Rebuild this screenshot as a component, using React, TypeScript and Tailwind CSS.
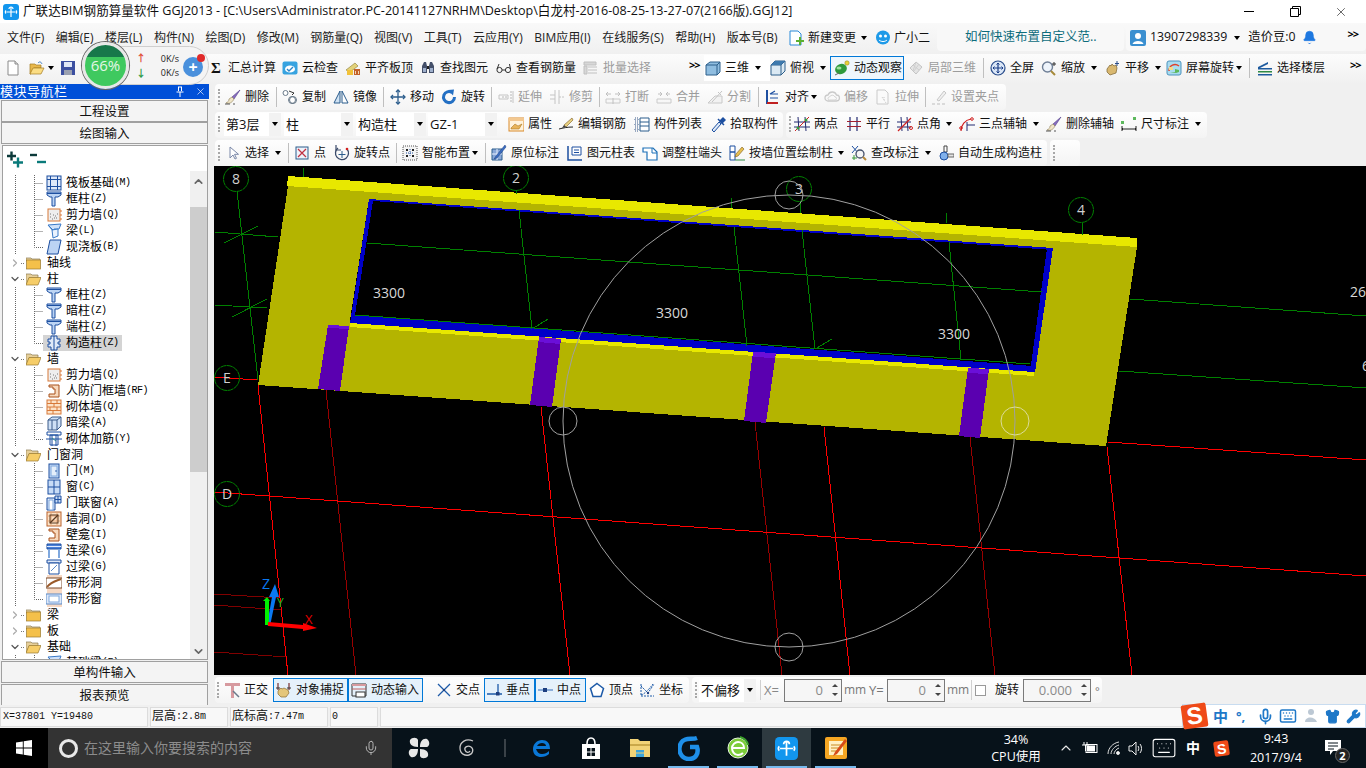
import React from 'react';
import { Bell, ChevronDown, ChevronRight, ChevronUp, Keyboard, Mic, Shirt, Wrench, X } from 'lucide-react';

const Svg: React.FC<{ children: React.ReactNode; s?: number }> = ({ children, s = 16 }) => (
  <svg width={s} height={s} viewBox="0 0 16 16" className="shrink-0">{children}</svg>
);

/* ---------- toolbar icons ---------- */
const icons = {
  doc: <Svg><path d="M3 1h7l3 3v11H3z" fill="#fff" stroke="#8a8a8a" /><path d="M10 1v3h3" fill="#ddd" stroke="#8a8a8a" /></Svg>,
  open: <Svg><path d="M1 4h5l1 1h5v3H5l-3 6H1z" fill="#e8b84c" stroke="#a57b22" strokeWidth=".7" /><path d="M4 8h11l-3 6H1z" fill="#fbdd84" stroke="#a57b22" strokeWidth=".7" /><path d="M9 3c2-2 3-1 4 1" fill="none" stroke="#3a7ac0" /></Svg>,
  save: <Svg><path d="M1 1h14v14H1z" fill="#3c4fa0" /><path d="M4 2h8v5H4z" fill="#dfe6f5" /><path d="M4 10h8v5H4z" fill="#9aa0b0" /></Svg>,
  cloud: <Svg><rect x=".5" y="1.5" width="15" height="13" rx="2" fill="#37a3e0" /><ellipse cx="8" cy="9" rx="5" ry="3.6" fill="#fff" /><path d="M5 9l2 2 4-4" fill="none" stroke="#2b85c8" strokeWidth="1.4" /></Svg>,
  level: <Svg><path d="M1 10l9-7 3 3-8 6z" fill="#e3d27a" stroke="#8a7a30" strokeWidth=".6" /><path d="M2 10h6v5H2z" fill="#f2c23a" /><path d="M9 9h6v6H9z" fill="#c4622a" /><path d="M10 11h1v3h-1zM13 11h1v3h-1z" fill="#f4d9b5" /></Svg>,
  bino: <Svg><path d="M2 6l2-4h2l1 4v7H2zM9 6l1-4h2l2 4v7H9z" fill="#44506a" /><path d="M3 8h3v4H3zM10 8h3v4h-3z" fill="#9fb0cc" /><path d="M7 6h2v3H7z" fill="#222" /></Svg>,
  glass: <Svg><circle cx="3.5" cy="10" r="2.6" fill="none" stroke="#333" /><circle cx="12" cy="10" r="2.6" fill="none" stroke="#333" /><path d="M6 10h3.500M1 9l2-5M14.500 9l-1-5" stroke="#333" fill="none" /></Svg>,
  batch: <Svg><path d="M1 2h12v3H1zM1 6h3v8H1zM5 7h9M5 10h9M5 13h9" fill="#d7d7d7" stroke="#c0c0c0" /></Svg>,
  cube: <Svg><path d="M1 5l4-3h10v10l-3 3H1z" fill="#8fbde0" stroke="#2d5f8a" /><path d="M1 5h11v10M12 5l3-3" fill="none" stroke="#2d5f8a" /></Svg>,
  cubeTop: <Svg><path d="M1 5l4-4h10v10l-4 4H1z" fill="#dbe9f3" stroke="#2d5f8a" /><path d="M1 5h10v10M11 5l4-4" fill="none" stroke="#2d5f8a" /><path d="M1 5l4-4h10l-4 4z" fill="#3d79ad" /></Svg>,
  orbit: <Svg><ellipse cx="7" cy="9" rx="6" ry="5" fill="#2f9a3c" transform="rotate(-25 7 9)" /><ellipse cx="5" cy="8" rx="2.500" ry="1.500" fill="#9fe09f" /><circle cx="13" cy="3" r="2.200" fill="#e8d23a" stroke="#8a7a20" strokeWidth=".5" /><path d="M1 15l4-2" stroke="#666" /></Svg>,
  localCube: <Svg><path d="M2 8l6-6 6 5-6 7z" fill="#e4e4e4" stroke="#c4c4c4" /><path d="M5 5l6 5M8 2l-3 9M11 4l-5 7" stroke="#cfcfcf" fill="none" /></Svg>,
  zoomAll: <Svg><circle cx="8" cy="8" r="7" fill="#dbe7f7" stroke="#2b4e8c" strokeWidth="1.200" /><path d="M8 3v10M3 8h10" stroke="#1b3e88" strokeWidth="1.200" /><path d="M6.500 4.500L8 3l1.500 1.500M6.500 11.500L8 13l1.500-1.500M4.500 6.500L3 8l1.500 1.500M11.500 6.500L13 8l-1.500 1.500" fill="none" stroke="#1b3e88" /></Svg>,
  zoom: <Svg><circle cx="6.500" cy="7" r="5" fill="#eef4fb" stroke="#6f7f96" strokeWidth="1.400" /><path d="M10 11l4 4" stroke="#a68a3a" strokeWidth="2" /><path d="M13 2v4M11 4h4" stroke="#333" /></Svg>,
  hand: <Svg><path d="M2 9l3-4 1 1 1-2 2 2 2-1 1 3-1 5-6 2-3-3z" fill="#d9b870" stroke="#7a6230" strokeWidth=".7" /><path d="M12 1v5M10 3.500h4" stroke="#2b4e8c" /></Svg>,
  rotateScreen: <Svg><rect x="1" y="1" width="14" height="14" rx="2" fill="#a9dcf0" stroke="#4d93bd" /><path d="M3 11c0-6 6-8 10-5" fill="none" stroke="#e0402a" strokeWidth="1.500" /><path d="M4 12h5v-3l4 1v2l-3 1z" fill="#5cb85c" /><path d="M3 7h4v3H3z" fill="#f2dc8a" /></Svg>,
  layers: <Svg><path d="M1 7l10-5v2L3 8h12v1.500H1z" fill="#1d5a9e" /><path d="M1 11h14v1.500H1z" fill="#2f8a44" /><path d="M1 14h14v1.500H1z" fill="#1d5a9e" /></Svg>,
  brush: <Svg><path d="M15 1L7 8l2 2z" fill="#8a6fc0" stroke="#4f3b88" strokeWidth=".6" /><path d="M7 8l-3 2c0 2-1 3-3 4 3 1 6 0 8-4z" fill="#f0e5c8" stroke="#8a7a50" strokeWidth=".6" /><path d="M0 15h5M8 15h2" stroke="#555" /></Svg>,
  copy: <Svg><circle cx="3.500" cy="4" r="2.500" fill="#fff" stroke="#6a7a8a" /><circle cx="10" cy="11" r="3.500" fill="#fff" stroke="#6a7a8a" /><circle cx="11" cy="11" r="3.500" fill="none" stroke="#6a7a8a" /><path d="M7 2l5 2-2 2" fill="none" stroke="#333" /></Svg>,
  mirror: <Svg><path d="M1 14L7 2v12z" fill="#cfe2f3" stroke="#2b5c8c" /><path d="M9 2l6 12H9z" fill="#fff" stroke="#2b5c8c" /></Svg>,
  move: <Svg><path d="M8 1v14M1 8h14" stroke="#2b5c8c" strokeWidth="1.300" /><path d="M6 3l2-2 2 2M6 13l2 2 2-2M3 6L1 8l2 2M13 6l2 2-2 2" fill="none" stroke="#2b5c8c" strokeWidth="1.300" /></Svg>,
  rotate: <Svg><path d="M11 3.500A5.500 5.500 0 1 0 13.500 8" fill="none" stroke="#2470c4" strokeWidth="3" /><path d="M7 1l6-.500-1 6z" fill="#2470c4" /></Svg>,
  extend: <Svg><path d="M1 6h9v4H1z" fill="none" stroke="#c4c4c4" /><path d="M4 8h5M13 2v12" stroke="#b8b8b8" strokeDasharray="2 1" /><path d="M15 2v12" stroke="#c4c4c4" /></Svg>,
  trim: <Svg><path d="M6 1v14M10 1v14M1 6h5M1 10h5" stroke="#c4c4c4" fill="none" /><path d="M10 8h5" stroke="#c4c4c4" strokeDasharray="2 1" /></Svg>,
  breakIc: <Svg><path d="M1 10h14v4H1z" fill="none" stroke="#cacaca" /><path d="M2 5h4M10 5h4M3 3L1 5l2 2M13 3l2 2-2 2M8 9v6" stroke="#c0c0c0" fill="none" /></Svg>,
  merge: <Svg><path d="M1 10h14v4H1z" fill="none" stroke="#cacaca" /><path d="M2 5h4M10 5h4M4 3l2 2-2 2M12 3l-2 2 2 2" stroke="#c0c0c0" fill="none" /></Svg>,
  split: <Svg><path d="M1 14L8 7h7v7z" fill="#f2f2f2" stroke="#c8c8c8" /><path d="M5 13l10-11M11 3l3 3" stroke="#c4c4c4" fill="none" /></Svg>,
  align: <Svg><path d="M2 1v14" stroke="#1d4fa0" strokeWidth="2" /><path d="M2 14h11" stroke="#c02020" strokeWidth="2" /><path d="M5 5l5-3M5 5h8M5 9h8" stroke="#1d4fa0" strokeWidth="1.200" fill="none" /></Svg>,
  offset: <Svg><path d="M4 12a3 3 0 0 1 0-6 4.500 4.500 0 0 1 8.500 0 3 3 0 0 1 0 6z" fill="none" stroke="#cacaca" strokeWidth="1.300" /><path d="M5.500 11a1.500 1.500 0 0 1 0-3 3 3 0 0 1 5.500 0 1.500 1.500 0 0 1 0 3z" fill="none" stroke="#d4d4d4" /></Svg>,
  stretch: <Svg><path d="M2 1h8l3 3v11H2z" fill="#fafafa" stroke="#cacaca" /><path d="M7 8l4 6M9 8v3" stroke="#c8c8c8" strokeDasharray="1 1" /></Svg>,
  grips: <Svg><path d="M6 11l7-9 2 2-7 8z" fill="#f0f0f0" stroke="#c8c8c8" /><path d="M1 15h3M6 15h3M11 15h3" stroke="#bdbdbd" /></Svg>,
  props: <Svg><rect x="1" y="2" width="15" height="13" fill="#fff3dc" stroke="#d98a2a" /><path d="M1 2h15v3H1z" fill="#f3c890" /><path d="M3 12l4-4 3 2 4-2-3 5H3z" fill="#e8b45a" stroke="#a06a10" strokeWidth=".5" /></Svg>,
  editBar: <Svg><path d="M1 13c4-1 8-2 14-2" stroke="#222" fill="none" /><path d="M14 2L6 9l2 2 7-7z" fill="#e8d080" stroke="#7a5a20" strokeWidth=".6" /><path d="M6 9l-2 3 4-1z" fill="#444" /></Svg>,
  list: <Svg><path d="M1 2h3v3H1zM1 7h3v3H1zM1 12h3v3H1z" fill="none" stroke="#3a5a8a" strokeDasharray="1 1" /><path d="M6 2h9v13H6zM6 6h9M6 10h9" fill="#fff" stroke="#2b5c8c" /></Svg>,
  picker: <Svg><path d="M2 14l7-8 2 2-7 8z" fill="#dfeaf8" stroke="#1d4fa0" /><path d="M9 5l4-4 3 3-4 4z" fill="#1d4fa0" /><path d="M8 3l6 6" stroke="#1d4fa0" strokeWidth="1.500" /></Svg>,
  two: <Svg><path d="M4 1l1 14M11 1l1 14M0 6h16M0 11h16" stroke="#232a70" /><path d="M1 15L15 1" stroke="#d02020" /><circle cx="4" cy="12" r="1.500" fill="#3a9a3a" /><circle cx="12" cy="4" r="1.500" fill="#3a9a3a" /></Svg>,
  parallel: <Svg><path d="M4 1v14M11 1v14" stroke="#232a70" strokeWidth="1.200" /><path d="M1 5.500h14M1 10.500h14" stroke="#a02030" strokeWidth="1.200" /></Svg>,
  angle: <Svg><path d="M4 1l1 14M10 1l1 14M0 6h14M0 11h14" stroke="#232a70" /><path d="M1 15L14 2" stroke="#d02020" strokeWidth="1.200" /><circle cx="14" cy="12" r="1.500" fill="none" stroke="#d02020" /></Svg>,
  three: <Svg><path d="M2 15c0-6 4-11 10-12" fill="none" stroke="#d02020" strokeWidth="1.200" /><path d="M8 6v9M8 9h8" stroke="#232a70" /><circle cx="13" cy="3" r="1.300" fill="none" stroke="#d02020" /><circle cx="2" cy="12" r="1.300" fill="none" stroke="#d02020" /></Svg>,
  dim: <Svg><path d="M1 10v5M15 10v5M1 13h14M2 12l-1 1 1 1M14 12l1 1-1 1" stroke="#222" fill="none" /><rect x="0" y="5" width="3" height="3" fill="#5cb85c" /><rect x="12" y="1" width="3" height="3" fill="#5cb85c" /></Svg>,
  cursor: <Svg><path d="M5 2l0 11 3-3 2 4 1.500-.700-2-4h4z" fill="#fff" stroke="#7a88a8" /></Svg>,
  point: <Svg><rect x="2" y="2" width="12" height="12" fill="#eef2fa" stroke="#2b5c8c" /><path d="M4 4l8 8M12 4l-8 8" stroke="#c03040" strokeWidth="1.200" /></Svg>,
  rotPoint: <Svg><path d="M4 3a6.500 6.500 0 1 0 9 1" fill="none" stroke="#3a4a6a" strokeWidth="1.300" /><path d="M2 0v5h5" fill="none" stroke="#3a4a6a" strokeWidth="1.200" /><path d="M8 6v7M4.500 9.500h7" stroke="#2b5c8c" /><circle cx="13" cy="4" r="1.300" fill="#d02020" /></Svg>,
  smart: <Svg><rect x="1" y="1" width="14" height="14" fill="#f4f4f4" stroke="#555" strokeDasharray="1 1" /><path d="M8 4v8M4 8h8" stroke="#1d4fa0" strokeDasharray="1 1" /><path d="M4 4h2v2H4zM10 4h2v2h-2zM4 10h2v2H4zM10 10h2v2h-2z" fill="#222" /></Svg>,
  inPlace: <Svg><path d="M1 4h10v11H1z" fill="#8aa8d8" stroke="#2b5c8c" /><path d="M1 9h10M6 4v11" stroke="#e8f0ff" /><path d="M14 0L5 11l-2 3 3-1 9-11z" fill="#3a6cc0" stroke="#1d3f80" strokeWidth=".5" /></Svg>,
  table: <Svg><path d="M1 1v14h14" fill="none" stroke="#1d4fa0" strokeWidth="1.500" /><path d="M5 2h9v8H5z" fill="#fff" stroke="#1d4fa0" /><path d="M7 5h5M7 7.500h5" stroke="#1d4fa0" /></Svg>,
  adjust: <Svg><path d="M1 3h10l4 4v8H5V7H1z" fill="#fff" stroke="#1d70b8" strokeWidth="1.200" /><path d="M10 3v5h5" fill="none" stroke="#1d70b8" /></Svg>,
  drawCol: <Svg><path d="M1 1h5v6H1zM1 7h5v8H1z" fill="#fff" stroke="#1d4fa0" /><path d="M6 15h10" stroke="#2f8a44" /><path d="M13 2l-6 7-1 3 3-1 6-7z" fill="#e8c050" stroke="#7a5a20" strokeWidth=".6" /></Svg>,
  check: <Svg><path d="M1 1l7 8M7 1L1 8" stroke="#1d4fa0" /><circle cx="9" cy="9" r="4" fill="#f5f5f5" stroke="#44506a" strokeWidth="1.300" /><path d="M12 12l3 3" stroke="#b88a3a" strokeWidth="2" /><path d="M1 13h5M3 10v5" stroke="#3a9a3a" /></Svg>,
  auto: <Svg><path d="M6 1h3v6H6z" fill="#fff" stroke="#444" /><ellipse cx="6" cy="11" rx="4" ry="4" fill="#7fb0ec" stroke="#1d4fa0" /><path d="M10 9h6v3h-6z" fill="#e4e4e4" stroke="#666" /></Svg>,
  ortho: <Svg><path d="M1 1h15v3H10v12H7V4H1z" fill="#d79a9f" /><path d="M9 9l6 6" stroke="#6a7a8a" strokeWidth="1.500" /></Svg>,
  snap: <Svg><path d="M2 9l3-3 1 1 2-1 2 1 2 1 1 3-3 4H5l-3-3z" fill="#e4c67a" stroke="#8a6a30" strokeWidth=".7" /><path d="M2 1v7M13 1v7" stroke="#7a3030" strokeWidth="1.200" /><path d="M0 6h4M11 6h4" stroke="#333" /></Svg>,
  dyn: <Svg><path d="M1 2h14v12H1z" fill="none" stroke="#333" /><path d="M1 2h14v2H1z" fill="#d79a9f" /><path d="M1 7h14" stroke="#c06060" /><rect x="5" y="10" width="9" height="5" fill="#fff" stroke="#333" /></Svg>,
  cross: <Svg><path d="M2 2l12 12M14 2L2 14" stroke="#1d5aa8" strokeWidth="1.300" /><rect x="7" y="7" width="2" height="2" fill="#1d3f80" /></Svg>,
  perp: <Svg><path d="M1 12h16M12 2v10" stroke="#1d5aa8" strokeWidth="1.300" /><rect x="10" y="10" width="3.500" height="3.500" fill="#1d3f80" /></Svg>,
  mid: <Svg><path d="M1 8h15" stroke="#5a8ac8" strokeWidth="1.300" /><rect x="6" y="6" width="4" height="4" fill="#1d3f80" /></Svg>,
  vertex: <Svg><path d="M8 1.500l6.500 5-2.500 8H4l-2.500-8z" fill="#fff" stroke="#1d5aa8" strokeWidth="1.500" /></Svg>,
  coord: <Svg><path d="M2 13c4-1 9-7 12-11M2 4l7 7 6-9M2 2v12M2 14h13" fill="none" stroke="#1d5aa8" strokeDasharray="2 1" /><circle cx="9" cy="11" r="1.200" fill="#1d3f80" /></Svg>,
};

/* ---------- tree icons ---------- */
const treeIcons: Record<string, React.ReactNode> = {
  raft: <Svg><rect x="1" y="1" width="14" height="14" fill="#dfe9f8" stroke="#1d4fa0" /><path d="M1 4.500h14M1 11.500h14M4.500 1v14M11.500 1v14" stroke="#1d4fa0" /></Svg>,
  tcol: <Svg><path d="M1 1h14v3l-3 2H9v9H6V6H4L1 4z" fill="#bcd4f4" stroke="#1d4fa0" /><path d="M1 2.500h14" stroke="#1d4fa0" /></Svg>,
  wall: <Svg><rect x="2" y="2" width="12" height="12" fill="#eee" stroke="#d87a3a" /><path d="M4 10h1M7 8h1M10 11h1M6 12h1M11 7h1M8 11h1M4 7h1M9 9h1" stroke="#777" /><path d="M14 4h2M14 8h2M14 12h2" stroke="#d87a3a" /></Svg>,
  beam: <Svg><path d="M2 2l13-1-2 5-5 0-1 2z" fill="#d0e2fa" stroke="#3a7ac8" /><path d="M6 7l1 8 5-2V6z" fill="#eaf3ff" stroke="#3a7ac8" /><path d="M3 3l4 4" stroke="#3a7ac8" /></Svg>,
  slab: <Svg><path d="M4 1h11l-3 14H1z" fill="#bcd4f4" stroke="#1d4fa0" /></Svg>,
  construct: <Svg><path d="M5 1h6v3h3v3h-2v2h2v3h-3v3H5v-3H2V9h2V7H2V4h3z" fill="#dfe9f8" stroke="#1d4fa0" /><path d="M8 1v14" stroke="#1d4fa0" /></Svg>,
  frameWall: <Svg><path d="M3 2h10v12H3v-3h6V6H7V4H3z" fill="#f7d9bd" stroke="#a8501a" /></Svg>,
  brick: <Svg><rect x="1" y="1" width="14" height="14" fill="#fde3c8" stroke="#d87a3a" /><path d="M1 4.500h14M1 8h14M1 11.500h14M5 1v3.500M11 1v3.500M8 4.500V8M4 8v3.500M11 8v3.500M7 11.500V15" stroke="#d87a3a" /></Svg>,
  hidden: <Svg><path d="M2 5l4-3h9v9l-4 4H2z" fill="#cfe0f5" stroke="#3a5a8a" /><path d="M2 5h9v10M11 5l4-3" fill="none" stroke="#3a5a8a" /><path d="M6 5v10" stroke="#3a5a8a" /></Svg>,
  rebar: <Svg><path d="M1 1h14v3H1zM4 4h8v10H4z" fill="none" stroke="#1d4fa0" /><path d="M0 8h16M6 4v11M10 4v11" stroke="#1d4fa0" /><path d="M6 7l4 3" stroke="#2b8a8a" /></Svg>,
  door: <Svg><rect x="3" y="1" width="10" height="14" fill="#c8dcf6" stroke="#1d4fa0" /><rect x="5" y="3" width="6" height="10" fill="#e4eefa" stroke="#7fa8de" /><circle cx="10" cy="8" r=".8" fill="#1d4fa0" /></Svg>,
  win: <Svg><rect x="2" y="1" width="12" height="14" fill="#c8dcf6" stroke="#1d4fa0" /><path d="M8 1v14M2 8h12" stroke="#1d4fa0" /></Svg>,
  doorWin: <Svg><path d="M1 3h8v12H1z" fill="#dfe9f8" stroke="#1d4fa0" /><path d="M3 5h4v10H3z" fill="#fff" stroke="#7fa8de" /><path d="M9 1h6v7H9z" fill="#c8dcf6" stroke="#1d4fa0" /><path d="M12 1v7M9 4.500h6" stroke="#1d4fa0" /></Svg>,
  hole: <Svg><rect x="1" y="1" width="14" height="14" fill="#fde3c8" stroke="#b8602a" /><path d="M1 5h14M1 10h14M5 1v14M11 1v14" stroke="#e8a878" /><path d="M4 12l8-8" stroke="#5a3a20" strokeWidth="1.300" /><rect x="4" y="4" width="8" height="8" fill="none" stroke="#5a3a20" /></Svg>,
  link: <Svg><path d="M1 1h14v5H1z" fill="#4a80d8" stroke="#1d4fa0" /><path d="M1 3.500h14" stroke="#e0ecff" /><path d="M3 6v9M13 6v9" stroke="#7fa8de" strokeWidth="2" /></Svg>,
  lintel: <Svg><path d="M1 1h14v3H1z" fill="#dfe9f8" stroke="#1d4fa0" /><path d="M3 4h10v11H3z" fill="#fff" stroke="#1d4fa0" /><path d="M5 12l6-6" stroke="#5a8ac8" /></Svg>,
  bandHole: <Svg><path d="M1 0h15v16H1z" fill="#f7d9c4" /><rect x="0" y="3" width="16" height="10" fill="#fff" stroke="#7a4a2a" /><path d="M1 12c4-5 9-6 14-8" stroke="#9a5a2a" strokeWidth="2" fill="none" /></Svg>,
  bandWin: <Svg><path d="M1 0h15v16H1z" fill="#f7d9c4" /><rect x="0" y="3" width="16" height="10" fill="#dfe9f8" stroke="#5a8ac8" /><rect x="3" y="5" width="10" height="6" fill="#fff" stroke="#7fa8de" /></Svg>,
};

const Caret: React.FC<{ className?: string }> = ({ className = 'ml-[6px]' }) => (
  <span className={`shrink-0 w-0 h-0 border-x-[3.5px] border-x-transparent border-t-[4px] border-t-black ${className}`} />
);
const Sep = () => <span className="shrink-0 w-px h-[20px] bg-[#bfbfbf]" />;
const Grip: React.FC<{ className?: string }> = ({ className = 'ml-[3px] mr-[5px]' }) => (
  <span className={`shrink-0 w-[2px] h-[16px] border-l-2 border-dotted border-[#a8a8a8] ${className}`} />
);
const More: React.FC<{ className: string }> = ({ className }) => (
  <span className={`shrink-0 text-[11px] font-bold tracking-[-1px] text-black ${className}`}>&gt;&gt;</span>
);

const Tool: React.FC<{
  icon: React.ReactNode; label: string; gray?: boolean; caret?: string; className?: string;
}> = ({ icon, label, gray, caret, className = '' }) => (
  <div className={`flex items-center shrink-0 h-full ${className}`}>
    <span className="w-4 flex justify-center shrink-0">{icon}</span>
    <span className={`ml-1 whitespace-nowrap ${gray ? 'text-[#9c9c9c]' : 'text-[#111]'}`}>{label}</span>
    {caret && <Caret className={caret} />}
  </div>
);

const Combo: React.FC<{ label: string; className: string }> = ({ label, className }) => (
  <div className={`flex shrink-0 h-[23px] ${className}`}>
    <span className="flex-1 bg-white pl-[2px] flex items-center text-[13px] text-[#111]">{label}</span>
    <span className="w-[12px] bg-[#f2f2f2] flex items-center justify-center"><Caret className="" /></span>
  </div>
);

const Spin: React.FC<{ value: string; className: string }> = ({ value, className }) => (
  <div className={`flex items-center shrink-0 h-[23px] border border-[#7a7a7a] bg-[#f6f6f6] ${className}`}>
    <span className="flex-1 text-right text-[13px] text-[#8a8a8a]">{value}</span>
    <span className="w-[13px] ml-[5px] flex flex-col items-center gap-[6px]">
      <span className="w-0 h-0 border-x-[3px] border-x-transparent border-b-[3px] border-b-[#444]" />
      <span className="w-0 h-0 border-x-[3px] border-x-transparent border-t-[3px] border-t-[#444]" />
    </span>
  </div>
);

const boxCls = 'flex items-center shrink-0 h-[26px] rounded-sm bg-gradient-to-b from-[#fefefe] to-[#f4f4f4]';
const blueBox = 'h-[24px] border border-[#0078d7] bg-[#e5f1fb]';

/* ---------- tree ---------- */
type Row =
  | { kind: 'group'; name: string; open: boolean }
  | { kind: 'child'; icon: string; name: string; code: string; last?: boolean; selected?: boolean };

const g = (name: string, open = true): Row => ({ kind: 'group', name, open });
const c = (icon: string, name: string, code = '', last = false, selected = false): Row => ({ kind: 'child', icon, name, code, last, selected });

const treeRows: Row[] = [
  c('raft', '筏板基础', '(M)'), c('tcol', '框柱', '(Z)'), c('wall', '剪力墙', '(Q)'), c('beam', '梁', '(L)'), c('slab', '现浇板', '(B)', true),
  g('轴线', false), g('柱'),
  c('tcol', '框柱', '(Z)'), c('tcol', '暗柱', '(Z)'), c('tcol', '端柱', '(Z)'), c('construct', '构造柱', '(Z)', true, true),
  g('墙'),
  c('wall', '剪力墙', '(Q)'), c('frameWall', '人防门框墙', '(RF)'), c('brick', '砌体墙', '(Q)'), c('hidden', '暗梁', '(A)'), c('rebar', '砌体加筋', '(Y)', true),
  g('门窗洞'),
  c('door', '门', '(M)'), c('win', '窗', '(C)'), c('doorWin', '门联窗', '(A)'), c('hole', '墙洞', '(D)'), c('frameWall', '壁龛', '(I)'),
  c('link', '连梁', '(G)'), c('lintel', '过梁', '(G)'), c('bandHole', '带形洞'), c('bandWin', '带形窗', '', true),
  g('梁', false), g('板', false), g('基础'),
  c('beam', '基础梁', '(F)'),
];

const Folder: React.FC<{ open: boolean }> = ({ open }) => (
  <svg width="15" height="14" viewBox="0 0 15 14" className="shrink-0">
    {open ? (
      <>
        <path d="M0 2h5l1 1h6v3H3L1 12H0z" fill="#e6cf9a" stroke="#8a7a50" strokeWidth=".7" />
        <path d="M3 5.500h12L12 13H0z" fill="#f6cd68" stroke="#9a7a30" strokeWidth=".7" />
      </>
    ) : (
      <>
        <path d="M0 2h5l1 1h8v2H0z" fill="#e6cf9a" stroke="#8a7a50" strokeWidth=".7" />
        <rect x=".5" y="4" width="14" height="9" fill="#f4c04a" stroke="#9a7a30" strokeWidth=".7" />
      </>
    )}
  </svg>
);

const TreeRow: React.FC<{ row: Row }> = ({ row }) => {
  if (row.kind === 'group') {
    return (
      <div className="flex items-center h-4 shrink-0">
        <span className="w-[10px] ml-[7px] flex justify-center shrink-0">
          {row.open
            ? <ChevronDown size={12} strokeWidth={2.4} className="text-[#555] shrink-0" />
            : <ChevronRight size={12} strokeWidth={2.4} className="text-[#aaa] shrink-0" />}
        </span>
        <span className="w-[3px] ml-[1px] mr-[2px] border-t border-dotted border-[#777] shrink-0" />
        <Folder open={row.open} />
        <span className="ml-[6px] text-[12px] text-black">{row.name}</span>
      </div>
    );
  }
  return (
    <div className="flex items-center h-4 shrink-0">
      <svg width="40" height="16" className="shrink-0">
        <path d="M12.500 0v16" stroke="#666" strokeDasharray="1 1" />
        <path d={row.last ? 'M31.500 0v8.500H40' : 'M31.500 0v16M31.500 8.500H40'} stroke="#666" strokeDasharray="1 1" fill="none" />
      </svg>
      <div className={`flex items-center h-4 pl-[3px] pr-[3px] ${row.selected ? 'bg-[#d4d4d4]' : ''}`}>
        {treeIcons[row.icon]}
        <span className="ml-1 text-[12px] text-black whitespace-nowrap">{row.name}</span>
        {row.code && <span className="font-['Liberation_Mono',monospace] text-[10px] tracking-[-0.5px] text-black">{row.code}</span>}
      </div>
    </div>
  );
};

const NavButton: React.FC<{ label: string; className?: string }> = ({ label, className = '' }) => (
  <div className={`flex items-center justify-center h-[22px] mx-[1px] pt-[2px] border border-[#a0a0a0] bg-[#f4f4f4] text-[12.500px] text-[#111] ${className}`}>{label}</div>
);

const LeftPanel = () => (
  <div className="flex flex-col w-[209px] shrink-0 h-[623px] bg-[#f0f0f0]">
    <div className="flex items-center h-[15px] bg-[#0050d8] text-white text-[13px]">
      <span className="tracking-[0.5px] flex-1 leading-none">模块导航栏</span>
      <svg width="10" height="11" viewBox="0 0 10 11" className="mr-[10px] shrink-0"><path d="M3 1h4M3.500 1v4M6.500 1v4M1.500 6h7M5 6v5" stroke="#fff" fill="none" /></svg>
      <X size={11} strokeWidth={1.4} className="text-white mr-[3px]" />
    </div>
    <NavButton label="工程设置" className="mt-px" />
    <NavButton label="绘图输入" />
    <div className="flex flex-col h-[515px] ml-[2px] mr-[1px] mt-[1px] border border-[#a0a0a0] bg-white overflow-hidden">
      <div className="flex items-center h-[25px] pl-[4px] shrink-0">
        <svg width="44" height="18" viewBox="0 0 44 18">
          <path d="M0 6h9M4.500 1.500v9" stroke="#0c3a3a" strokeWidth="2.400" /><path d="M6 12.500h10M11 7.500v10" stroke="#0a7a7a" strokeWidth="2.400" />
          <path d="M23 5h7" stroke="#0c3a3a" strokeWidth="2.400" /><path d="M30 12h9" stroke="#0a7a7a" strokeWidth="2.400" />
        </svg>
      </div>
      <div className="flex flex-1 min-h-0">
        <div className="flex flex-col flex-1 min-w-0 pt-[4px] overflow-hidden">
          {treeRows.map((row, i) => <TreeRow key={i} row={row} />)}
        </div>
        <div className="flex flex-col w-[17px] shrink-0 bg-[#f0f0f0]">
          <div className="h-[36px] pt-[4px] flex justify-center shrink-0"><ChevronUp size={13} strokeWidth={3} className="text-[#666]" /></div>
          <div className="h-[265px] bg-[#cdcdcd] shrink-0" />
          <div className="flex-1 flex items-end justify-center pb-[1px]"><ChevronDown size={13} strokeWidth={3} className="text-[#666]" /></div>
        </div>
      </div>
    </div>
    <NavButton label="单构件输入" className="mt-[1px]" />
    <NavButton label="报表预览" className="mt-[1px]" />
  </div>
);

/* ---------- drawing canvas ---------- */
const greenLines = [
  [237, 191, 258, 380], [303, 168, 303, 177], [516, 190, 517, 194], [519, 210, 532, 329], [734, 227, 747, 346], [731, 198, 731, 208],
  [800, 201, 801, 213], [802, 230, 815, 349], [946, 213, 946, 223], [949, 242, 961, 360], [1082, 223, 1083, 235],
  [367, 243, 1042, 292], [355, 315, 1030, 364], [1130, 299, 1366, 316], [1119, 371, 1366, 388], [215, 232, 278, 237], [215, 305, 267, 308],
  [224, 243, 258, 226], [232, 317, 267, 299], [532, 329, 548, 319], [815, 349, 832, 339],
];
const redLines = [
  [214, 377, 258, 380, 1], [258, 385, 288, 675, 1], [326, 390, 356, 675, .6], [541, 407, 570, 675, 1], [755, 422, 782, 675, .6],
  [824, 427, 850, 675, 1], [970, 437, 995, 675, .6], [1107, 447, 1132, 675, 1], [1108, 442, 1366, 460, 1], [214, 492, 1366, 576, 1],
  [214, 594, 280, 598, .5], [214, 605, 282, 610, .5], [214, 652, 287, 657, .5],
];
const columns = [
  ['328,325 349,326 340,391 318,389', '328,325 349,326 349,329 328,328'],
  ['539,337 561,339 552,407 530,405', '539,337 561,339 560,344 539,342'],
  ['753,352 776,353 766,423 744,421', '753,352 776,353 775,358 753,357'],
  ['968,368 989,369 980,438 959,436', '968,368 989,369 988,374 968,373'],
];
const axisBubbles: [number, number, string][] = [[236, 179, '8'], [516, 178, '2'], [799, 189, '3'], [1081, 210, '4'], [227, 378, 'E'], [227, 494, 'D']];

const Canvas = () => (
  <svg width="1152" height="509" viewBox="214 166 1152 509" className="block shrink-0 bg-black">
    <g shapeRendering="crispEdges">
      {redLines.map(([x1, y1, x2, y2, o], i) => <line key={i} x1={x1} y1={y1} x2={x2} y2={y2} stroke="#ff0000" strokeOpacity={o} />)}
      {greenLines.slice(15).concat(greenLines.slice(0, 1)).map(([x1, y1, x2, y2], i) => <line key={i} x1={x1} y1={y1} x2={x2} y2={y2} stroke="#008000" />)}
      <polygon fillRule="evenodd" fill="#b4b400" points="288,186 1137,247 1106,446 258,385 288,186 369,199 350,320 1035,372 1053,248 369,199" />
      <polygon fill="#e8e800" points="288,176 1137,238 1137,247 287,186" />
      <polygon fill="#0000c8" points="369,199 1053,248 1053,250 373,201 355,315 1033,366 1034,372 350,323" />
      <polygon fill="#0000c8" points="1047,248 1053,248 1035,372 1030,372" />
      <polygon fill="#e8e800" points="350,323 1034,372 1034,376 350,327" />
      {columns.map(([body, top], i) => (
        <g key={i}>
          <polygon points={body} fill="#5a00b0" />
          <polygon points={top} fill="#6a0fd8" />
        </g>
      ))}
      {greenLines.slice(1, 15).map(([x1, y1, x2, y2], i) => <line key={i} x1={x1} y1={y1} x2={x2} y2={y2} stroke="#008000" />)}
    </g>
    {axisBubbles.map(([x, y, t]) => (
      <g key={t}>
        <circle cx={x} cy={y} r="12.500" fill="none" stroke="#008000" strokeDasharray="6 0.500" />
        <text x={x} y={y + 5} textAnchor="middle" fontFamily="Open Sans" fontSize="14" fill="#d0d0d0">{t}</text>
      </g>
    ))}
    <g fill="none" stroke="#a0a0a0">
      <circle cx="789" cy="421" r="226" />
      <circle cx="789" cy="195" r="14" />
      <circle cx="789" cy="647" r="14" />
      <circle cx="563" cy="421" r="14" />
      <circle cx="1015" cy="421" r="14" stroke="#dcdc9a" />
    </g>
    <g fontFamily="Open Sans" fontSize="14" fill="#d8d8d8">
      <text x="373" y="298">3300</text>
      <text x="656" y="318">3300</text>
      <text x="938" y="339">3300</text>
      <text x="1350" y="297">26</text>
      <text x="1362" y="371">6</text>
    </g>
    <path d="M267 625L272 597L269 597L275 584L279 597L276 597L270 626z" fill="#0a78f0" />
    <path d="M265 625v-24h-2l4-4 3 4h-1v24z" fill="#00f000" />
    <path d="M268 622L303 625L303 623L317 628L303 631L303 629L268 626z" fill="#ff0000" />
    <text x="262" y="589" fontFamily="Open Sans" fontSize="14" fill="#0a78f0">Z</text>
    <text x="277" y="607" fontFamily="Open Sans" fontSize="12" fill="#20c020">Y</text>
    <text x="305" y="624" fontFamily="Open Sans" fontSize="13" fill="#e00000">X</text>
  </svg>
);

/* ---------- taskbar ---------- */
const Slot: React.FC<{ children: React.ReactNode; on?: boolean; active?: boolean }> = ({ children, on, active }) => (
  <div className={`relative flex items-center justify-center w-[49px] h-10 shrink-0 ${active ? 'bg-[#2e3a40]' : ''}`}>
    {children}
    {on && <span className="absolute bottom-0 left-1 right-1 h-[2px] bg-[#76b9ed]" />}
  </div>
);

const AppLogo: React.FC<{ s?: number }> = ({ s = 16 }) => (
  <svg width={s} height={s} viewBox="0 0 16 16" className="shrink-0">
    <rect width="16" height="16" rx="3" fill="#1296ee" />
    <path d="M8 3v10M3.500 8H8M8 8h4.500M6 5a2 2 0 0 1 4 0M3 6.500a2 2 0 0 0 0 3M13 6.500a2 2 0 0 1 0 3" fill="none" stroke="#fff" strokeWidth="1.200" />
  </svg>
);

const SogouS: React.FC<{ className: string }> = ({ className }) => (
  <span className={`flex items-center justify-center shrink-0 bg-[#ef4a18] text-white font-bold font-['Liberation_Sans',sans-serif] -rotate-[8deg] rounded-[2px] ${className}`}>S</span>
);

const Taskbar = () => (
  <div className="flex items-center h-10 shrink-0 bg-[#07121a] text-white">
    <div className="flex items-center justify-center w-12 h-10 bg-black shrink-0">
      <svg width="16" height="16" viewBox="0 0 16 16"><path d="M0 2.500l6.800-1v6H0zM7.700 1.300L16 0v7.500H7.700zM0 8.500h6.800v6l-6.800-1zM7.700 8.500H16V16l-8.300-1.300z" fill="#fff" /></svg>
    </div>
    <div className="flex items-center w-[344px] h-10 bg-[#333] shrink-0">
      <span className="ml-[11px] w-[19px] h-[19px] rounded-full border-[3px] border-[#e8e8e8] shrink-0" />
      <span className="ml-[6px] text-[14px] text-[#8c8c8c] whitespace-nowrap">在这里输入你要搜索的内容</span>
      <Mic size={16} strokeWidth={1.4} className="ml-[111px] text-[#bbb] shrink-0" />
    </div>
    <div className="w-[2px] shrink-0" />
    <Slot>
      <svg width="22" height="22" viewBox="0 0 22 22">
        <path d="M10 10C4 10 1 7 2 3c2-3 7-3 8 0zM12 10c0-6 3-9 7-8 3 2 3 7 0 8zM12 12c6 0 9 3 8 7-2 3-7 3-8 0zM10 12c0 6-3 9-7 8-3-2-3-7 0-8z" fill="#e8e8e8" />
      </svg>
    </Slot>
    <Slot>
      <svg width="20" height="20" viewBox="0 0 20 20" fill="none" stroke="#c8c8c8" strokeWidth="1.300"><path d="M15 3C8 0 2 4 2 10s5 8 9 7 5-6 2-8-7 0-6 3 4 3 5 1" /></svg>
    </Slot>
    <div className="flex items-center justify-center w-[25px] shrink-0"><span className="w-[2px] h-[18px] border-x border-[#3a4248]" /></div>
    <Slot>
      <svg width="22" height="22" viewBox="0 0 22 22" fill="none"><path d="M5 12h14c0-6-3-9-8-9S2 7 2 12c0 6 4 8 8 8 3 0 6-1 8-3v-3c-2 2-4 3-7 3-3 0-5-2-6-5zM6 9c1-2 3-3 5-3s4 1 4 3z" fill="#0a78d8" fillRule="evenodd" /></svg>
    </Slot>
    <Slot>
      <svg width="20" height="22" viewBox="0 0 20 22"><path d="M1 7h18v15H1z" fill="#fff" /><path d="M6 7c0-8 8-8 8 0" fill="none" stroke="#fff" strokeWidth="1.600" /><path d="M6 11h3.500v3.500H6zM10.500 11H14v3.500h-3.500zM6 15.500h3.500V19H6zM10.500 15.500H14V19h-3.500z" fill="#07121a" /></svg>
    </Slot>
    <Slot>
      <svg width="22" height="20" viewBox="0 0 22 20"><path d="M1 1h8l2 2h10v16H1z" fill="#f2d377" /><path d="M1 6h20v2H1z" fill="#caa84a" /><path d="M7 12h8v7H7z" fill="#3ba4dc" /><path d="M7 15h8" stroke="#f2d377" /></svg>
    </Slot>
    <Slot on>
      <svg width="22" height="26" viewBox="0 0 22 26" fill="none"><path d="M19 3C14 5 6 2 3 8c-4 7 0 16 8 16 7 0 10-6 8-12h-7" stroke="#1e8fe8" strokeWidth="4.500" /></svg>
    </Slot>
    <Slot on>
      <svg width="24" height="24" viewBox="0 0 24 24" fill="none"><circle cx="12" cy="12" r="10" fill="#7ccc3a" stroke="#e8f5e0" /><path d="M6 12h12c0-4-3-6-6-6s-6 3-6 6 2 7 6 7c2 0 4-1 5-2" stroke="#fff" strokeWidth="2" /><path d="M14 1c4 1 7 4 8 8" stroke="#3aa02a" strokeWidth="2" /></svg>
    </Slot>
    <Slot on active><AppLogo s={23} /></Slot>
    <Slot on>
      <svg width="24" height="24" viewBox="0 0 24 24"><rect x="1" y="1" width="22" height="22" rx="2" fill="#f5a623" /><path d="M5 5h14v14H5z" fill="#fff1c4" /><path d="M7 9h10M7 12h10M7 15h7" stroke="#c98a20" /><path d="M21 3L11 16l-2 4 4-2L23 5z" fill="#d84a18" /></svg>
    </Slot>
    <div className="flex flex-col items-center w-[56px] ml-[128px] shrink-0 text-[12.500px] leading-[17px]">
      <span>34%</span>
      <span className="whitespace-nowrap">CPU使用</span>
    </div>
    <ChevronUp size={16} strokeWidth={1.6} className="ml-[14px] shrink-0 text-[#e8e8e8]" />
    <svg width="17" height="14" viewBox="0 0 17 14" className="ml-[7px] shrink-0" fill="none" stroke="#fff"><path d="M3 1v3M6 1v3M1 4h7M4.500 4v6" /><rect x="5" y="3.500" width="11" height="8" /><rect x="6.500" y="5" width="7" height="5" fill="#fff" /></svg>
    <svg width="17" height="15" viewBox="0 0 17 15" className="ml-[9px] shrink-0" fill="none" stroke="#ddd"><path d="M1 13c0-6 5-11 11-12M4 13c0-4 4-8 8-9M7 13c0-2 2-5 5-6" /><circle cx="11" cy="12" r="1.500" fill="#fff" /></svg>
    <svg width="15" height="15" viewBox="0 0 15 15" className="ml-[4px] shrink-0" fill="none" stroke="#eee"><path d="M1 5h3l4-4v13l-4-4H1zM10 5c1 1 1 4 0 5M12 3c2 2 2 7 0 9" /></svg>
    <Keyboard size={26} strokeWidth={1} className="ml-[8px] shrink-0 text-white" />
    <span className="ml-[9px] text-[14px] font-bold shrink-0">中</span>
    <SogouS className="ml-[14px] w-[15px] h-[15px] text-[14px]" />
    <div className="flex flex-col items-center w-[56px] ml-[19px] shrink-0 text-[12.500px] leading-[19px]">
      <span>9:43</span>
      <span>2017/9/4</span>
    </div>
    <div className="relative flex items-center justify-center w-[20px] h-[18px] ml-[19px] shrink-0">
      <svg width="17" height="16" viewBox="0 0 17 16"><path d="M0 0h16v11H8l-3 4v-4H0z" fill="#fff" /><path d="M3 3h10M3 6h10M3 9h6" stroke="#07121a" /></svg>
      <span className="absolute -right-[7px] -bottom-[6px] flex items-center justify-center w-[15px] h-[15px] rounded-full border border-[#666] bg-[#222] text-[11px] font-bold">2</span>
    </div>
  </div>
);

const App: React.FC = () => (
  <div className="relative w-[1366px] h-[768px] overflow-hidden flex flex-col bg-[#f0f0f0] font-['Open_Sans','Noto_Sans_CJK_SC',sans-serif] text-[12px] leading-none text-[#111]">
    {/* title bar */}
    <div className="flex items-center h-[23px] shrink-0 bg-white">
      <span className="ml-[3px]"><AppLogo /></span>
      <span className="ml-[4px] text-[12.570px] whitespace-nowrap flex-1">广联达BIM钢筋算量软件 GGJ2013 - [C:\Users\Administrator.PC-20141127NRHM\Desktop\白龙村-2016-08-25-13-27-07(2166版).GGJ12]</span>
      <div className="flex items-center justify-center w-[46px]"><span className="w-[10px] h-px bg-black" /></div>
      <div className="flex items-center justify-center w-[46px]">
        <svg width="11" height="11" viewBox="0 0 11 11" fill="none" stroke="#000"><path d="M.5 2.500h8v8h-8zM2.500 2.500v-2h8v8h-2" /></svg>
      </div>
      <div className="flex items-center justify-center w-[46px] mr-[2px]"><X size={14} strokeWidth={1} className="text-black" /></div>
    </div>

    {/* menu bar */}
    <div className="flex items-center h-[31px] shrink-0 bg-gradient-to-b from-[#f9f9f9] to-[#f0f0f0] pl-[7px] pb-[2px]">
      <div className="flex items-center gap-[11.500px] shrink-0 w-[781px] text-[12px] text-[#222] whitespace-nowrap">
        {['文件(F)', '编辑(E)', '楼层(L)', '构件(N)', '绘图(D)', '修改(M)', '钢筋量(Q)', '视图(V)', '工具(T)', '云应用(Y)', 'BIM应用(I)', '在线服务(S)', '帮助(H)', '版本号(B)'].map((m) => <span key={m}>{m}</span>)}
      </div>
      <Tool className="w-[87px]" icon={<Svg><path d="M2 1h8l3 3v11H2z" fill="#fff" stroke="#2b8ad8" /><path d="M8 10h3V7h2v3h3v2h-3v3h-2v-3H8z" fill="#5cb030" /></Svg>} label="新建变更" caret="ml-[5px]" />
      <div className="flex items-center shrink-0 w-[62px]">
        <svg width="16" height="15" viewBox="0 0 16 15" className="shrink-0"><circle cx="8" cy="7.500" r="7" fill="#1e9ae8" /><circle cx="5.500" cy="6" r="1.500" fill="#fff" /><circle cx="10.500" cy="6" r="1.500" fill="#fff" /><path d="M4 10c2 2 6 2 8 0" stroke="#fff" fill="none" /></svg>
        <span className="ml-[3px] whitespace-nowrap">广小二</span>
      </div>
      <div className="flex items-center h-[26px] w-[187px] shrink-0 bg-[#f8f8f8] rounded-sm pl-[28px] text-[12.500px] text-[#0d6c7c] whitespace-nowrap">如何快速布置自定义范..</div>
      <div className="flex items-center h-[26px] ml-[2px] flex-1 bg-[#f8f8f8] rounded-sm pl-[4px]">
        <svg width="16" height="16" viewBox="0 0 16 16" className="shrink-0"><rect width="16" height="16" rx="2" fill="#3a8fd0" /><circle cx="8" cy="6" r="3" fill="#fff" /><path d="M2.500 14c1-4 10-4 11 0z" fill="#fff" /></svg>
        <span className="ml-1 text-[12.300px]">13907298339</span>
        <Caret className="ml-[7px]" />
        <span className="ml-[8px] text-[12.300px] whitespace-nowrap">造价豆:0</span>
        <Bell size={15} fill="#1e78e0" strokeWidth={1} className="ml-[6px] text-[#1e78e0] shrink-0" />
        <More className="ml-[31px] mb-[8px]" />
      </div>
    </div>

    {/* standard toolbar */}
    <div className="flex items-center h-[30px] shrink-0 bg-gradient-to-b from-[#fcfcfc] to-[#f0f0f0] pl-[5px] pb-[2px]">
      <Tool className="w-[24px]" icon={icons.doc} label="" />
      <span className="w-4 flex justify-center shrink-0">{icons.open}</span>
      <Caret className="ml-[3px]" />
      <span className="ml-[6px] w-4 flex justify-center shrink-0">{icons.save}</span>
      <span className="w-[135px] shrink-0" />
      <div className="flex items-center w-[71px] h-full shrink-0">
        <span className="w-[17px] text-[15px] font-bold font-['Liberation_Serif',serif]">Σ</span>
        <span className="whitespace-nowrap">汇总计算</span>
      </div>
      <Tool className="w-[63px]" icon={icons.cloud} label="云检查" />
      <Tool className="w-[75px]" icon={icons.level} label="平齐板顶" />
      <Tool className="w-[76px]" icon={icons.bino} label="查找图元" />
      <Tool className="w-[87px]" icon={icons.glass} label="查看钢筋量" />
      <Tool className="w-[106px]" icon={icons.batch} label="批量选择" gray />
      <More className="w-[15px] mb-[8px]" />
      <div className="flex items-center w-[66px] h-[26px] bg-white pl-[1px] shrink-0"><Tool icon={icons.cube} label="三维" caret="ml-[6px]" /></div>
      <Tool className="w-[60px]" icon={icons.cubeTop} label="俯视" caret="ml-[6px]" />
      <div className="flex items-center w-[74px] h-[24px] border border-[#0078d7] bg-[#eef6fc] pl-[3px] shrink-0"><Tool icon={icons.orbit} label="动态观察" /></div>
      <Tool className="w-[75px] ml-[4px]" icon={icons.localCube} label="局部三维" gray />
      <Sep />
      <Tool className="w-[51px] ml-[6px]" icon={icons.zoomAll} label="全屏" />
      <Tool className="w-[64px]" icon={icons.zoom} label="缩放" caret="ml-[6px]" />
      <Tool className="w-[61px]" icon={icons.hand} label="平移" caret="ml-[6px]" />
      <Tool className="w-[83px]" icon={icons.rotateScreen} label="屏幕旋转" caret="ml-[2px]" />
      <Sep />
      <Tool className="w-[93px] ml-[7px]" icon={icons.layers} label="选择楼层" />
      <More className="mb-[8px]" />
    </div>

    <div className="flex flex-1 min-h-0">
      <LeftPanel />
      <div className="flex flex-col ml-[5px] w-[1152px] shrink-0">
        {/* edit toolbar */}
        <div className={`${boxCls} w-[791px] ml-px`}>
          <Grip className="ml-[3px] mr-[5px]" />
          <Tool className="w-[51px]" icon={icons.brush} label="删除" />
          <Sep />
          <Tool className="w-[51px] ml-[5px]" icon={icons.copy} label="复制" />
          <Tool className="w-[50px]" icon={icons.mirror} label="镜像" />
          <Sep />
          <Tool className="w-[51px] ml-[6px]" icon={icons.move} label="移动" />
          <Tool className="w-[50px]" icon={icons.rotate} label="旋转" />
          <Sep />
          <Tool className="w-[51px] ml-[6px]" icon={icons.extend} label="延伸" gray />
          <Tool className="w-[50px]" icon={icons.trim} label="修剪" gray />
          <Sep />
          <Tool className="w-[51px] ml-[5px]" icon={icons.breakIc} label="打断" gray />
          <Tool className="w-[51px]" icon={icons.merge} label="合并" gray />
          <Tool className="w-[51px]" icon={icons.split} label="分割" gray />
          <Sep />
          <Tool className="w-[59px] ml-[6px]" icon={icons.align} label="对齐" caret="ml-[2px]" />
          <Tool className="w-[51px]" icon={icons.offset} label="偏移" gray />
          <Tool className="w-[50px]" icon={icons.stretch} label="拉伸" gray />
          <Sep />
          <Tool className="w-[73px] ml-[5px]" icon={icons.grips} label="设置夹点" gray />
        </div>

        {/* element toolbars */}
        <div className="flex mt-[2px] shrink-0">
          <div className={`${boxCls} w-[568px] ml-px pb-[2px]`}>
            <Grip className="ml-[3px] mr-[4px]" />
            <Combo label="第3层" className="w-[57px]" />
            <Combo label="柱" className="w-[69px] ml-[3px]" />
            <Combo label="构造柱" className="w-[70px] ml-[3px]" />
            <Combo label="GZ-1" className="w-[69px] ml-[2px]" />
            <span className="ml-[5px]"><Sep /></span>
            <Tool className="w-[50px] ml-[6px]" icon={icons.props} label="属性" />
            <Tool className="w-[76px]" icon={icons.editBar} label="编辑钢筋" />
            <Tool className="w-[76px]" icon={icons.list} label="构件列表" />
            <Tool className="w-[70px]" icon={icons.picker} label="拾取构件" />
          </div>
          <div className={`${boxCls} w-[421px] ml-[3px] pb-[2px]`}>
            <Grip className="ml-[3px] mr-[3px]" />
            <Tool className="w-[52px]" icon={icons.two} label="两点" />
            <Tool className="w-[51px]" icon={icons.parallel} label="平行" />
            <Tool className="w-[62px]" icon={icons.angle} label="点角" caret="ml-[5px]" />
            <Tool className="w-[87px]" icon={icons.three} label="三点辅轴" caret="ml-[6px]" />
            <Tool className="w-[75px]" icon={icons.brush} label="删除辅轴" />
            <Tool className="w-[85px]" icon={icons.dim} label="尺寸标注" caret="ml-[6px]" />
          </div>
        </div>

        <div className="flex mt-[2px] shrink-0">
          <div className={`${boxCls} w-[832px] ml-px`}>
            <Grip className="ml-[3px] mr-[5px]" />
            <Tool className="w-[63px]" icon={icons.cursor} label="选择" caret="ml-[6px]" />
            <Sep />
            <Tool className="w-[40px] ml-[5px]" icon={icons.point} label="点" />
            <Tool className="w-[62px]" icon={icons.rotPoint} label="旋转点" />
            <Sep />
            <Tool className="w-[83px] ml-[5px]" icon={icons.smart} label="智能布置" caret="ml-[2px]" />
            <Sep />
            <Tool className="w-[76px] ml-[5px]" icon={icons.inPlace} label="原位标注" />
            <Tool className="w-[75px]" icon={icons.table} label="图元柱表" />
            <Tool className="w-[87px]" icon={icons.adjust} label="调整柱端头" />
            <Tool className="w-[122px]" icon={icons.drawCol} label="按墙位置绘制柱" caret="ml-[5px]" />
            <Tool className="w-[87px]" icon={icons.check} label="查改标注" caret="ml-[6px]" />
            <Tool className="w-[108px]" icon={icons.auto} label="自动生成构造柱" />
          </div>
          <div className={`${boxCls} w-[30px] ml-[3px]`}><Grip /></div>
        </div>

        <Canvas />

        {/* snap bar */}
        <div className="flex items-center h-[30px] shrink-0">
          <div className={`${boxCls} w-[474px] ml-px`}>
            <Grip className="ml-[2px] mr-[5px]" />
            <Tool className="w-[49px]" icon={icons.ortho} label="正交" />
            <div className={`flex items-center w-[75px] pl-[2px] shrink-0 ${blueBox}`}><Tool icon={icons.snap} label="对象捕捉" /></div>
            <div className={`flex items-center w-[75px] pl-[2px] shrink-0 ${blueBox}`}><Tool icon={icons.dyn} label="动态输入" /></div>
            <Tool className="w-[48px] ml-[13px]" icon={icons.cross} label="交点" />
            <div className={`flex items-center w-[51px] pl-[1px] shrink-0 ${blueBox}`}><Tool icon={icons.perp} label="垂点" /></div>
            <div className={`flex items-center w-[51px] pl-[1px] shrink-0 ${blueBox}`}><Tool icon={icons.mid} label="中点" /></div>
            <Tool className="w-[50px] ml-[3px]" icon={icons.vertex} label="顶点" />
            <Tool className="w-[49px]" icon={icons.coord} label="坐标" />
          </div>
          <div className={`${boxCls} w-[410px] ml-[3px]`}>
            <Grip className="ml-[3px] mr-[1px]" />
            <Combo label="不偏移" className="w-[57px] ml-[1px]" />
            <span className="w-px h-[20px] bg-[#d0d0d0] ml-[4px] shrink-0" />
            <span className="ml-[3px] w-[20px] text-[13px] text-[#888]">X=</span>
            <Spin value="0" className="w-[58px]" />
            <span className="ml-[2px] w-[25px] text-[12px] text-[#777]">mm</span>
            <span className="w-[18px] text-[13px] text-[#777]">Y=</span>
            <Spin value="0" className="w-[58px]" />
            <span className="ml-[2px] w-[24px] text-[12px] text-[#777]">mm</span>
            <span className="w-px h-[20px] bg-[#d0d0d0] shrink-0" />
            <span className="ml-[3px] w-[11px] h-[11px] border border-[#999] bg-white shrink-0" />
            <span className="ml-[9px] w-[28px] text-[12px]">旋转</span>
            <Spin value="0.000" className="w-[68px]" />
            <span className="ml-[4px] text-[11px] text-[#777]">°</span>
          </div>
        </div>
      </div>
    </div>

    {/* status bar */}
    <div className="flex items-center h-[23px] shrink-0 bg-[#f0f0f0] pt-[1px] font-['Liberation_Mono','Noto_Sans_CJK_SC',monospace] text-[10px]">
      <span className="flex items-center w-[148px] h-[20px] pl-[2px] border border-[#dcdcdc] bg-[#f8f8f8] shrink-0">X=37801 Y=19480</span>
      <span className="flex items-center w-[78px] h-[20px] ml-[2px] pl-[1px] border border-[#dcdcdc] bg-[#f8f8f8] shrink-0 whitespace-nowrap"><span className="text-[12px]">层高</span>:2.8m</span>
      <span className="flex items-center w-[98px] h-[20px] ml-[2px] pl-[1px] border border-[#dcdcdc] bg-[#f8f8f8] shrink-0 whitespace-nowrap"><span className="text-[12px]">底标高</span>:7.47m</span>
      <span className="flex items-center w-[48px] h-[20px] ml-[2px] pl-[1px] border border-[#dcdcdc] bg-[#f8f8f8] shrink-0">0</span>
      <span className="flex-1 h-[20px] ml-[2px] border border-[#dcdcdc] bg-[#f8f8f8]" />
    </div>

    <Taskbar />

    {/* net speed widget floating over the toolbar */}
    <div className="absolute left-[82px] top-[42px] flex items-center w-[127px] h-[47px]">
      <div className="flex items-center justify-center w-[47px] h-[47px] rounded-full border-[3px] border-[#e8e8e8] bg-[linear-gradient(#17784a_0_30%,#3fc95f_30%)] shadow-[0_0_0_1px_#666] z-10 shrink-0">
        <span className="text-[15px] text-[#e4f7e6]">66%</span>
      </div>
      <div className="flex items-center -ml-[20px] pl-[26px] w-[100px] h-[39px] rounded-r-[20px] border border-[#cfcfcf] bg-[#f4f4f4] shrink-0">
        <div className="flex flex-col gap-[5px] shrink-0 w-[8px] text-[10px] font-bold">
          <span className="text-[#e0503a]">↑</span>
          <span className="text-[#2f9a4a]">↓</span>
        </div>
        <div className="flex flex-col items-end gap-[5px] w-[35px] text-[9px] text-[#222] shrink-0">
          <span>0K/s</span>
          <span>0K/s</span>
        </div>
        <div className="relative flex items-center justify-center ml-[4px] w-[20px] h-[20px] mt-[3px] rounded-full bg-[#4a90dc] text-white text-[16px] font-bold shrink-0">
          +
          <span className="absolute -right-[2px] -top-[3px] w-[8px] h-[8px] rounded-full bg-[#e02a2a]" />
        </div>
      </div>
    </div>

    {/* sogou input bar floating over the status bar */}
    <div className="absolute left-[1182px] top-[704px] flex items-center w-[184px] h-[24px] bg-white border border-[#c8dcf0] text-[#1e78c8]">
      <SogouS className="-ml-[1px] w-[25px] h-[24px] text-[24px]" />
      <span className="ml-[6px] text-[15px] font-bold">中</span>
      <span className="ml-[8px] text-[13px] font-bold">°,</span>
      <Mic size={17} className="ml-[12px] shrink-0" strokeWidth={2.4} />
      <Keyboard size={18} className="ml-[5px] shrink-0" strokeWidth={2} />
      <svg width="16" height="16" viewBox="0 0 16 16" className="ml-[7px] shrink-0"><circle cx="7" cy="4" r="3" fill="#bcc8d4" /><path d="M1 14c0-6 10-6 12 0z" fill="#bcc8d4" /></svg>
      <Shirt size={15} fill="#1e78c8" className="ml-[5px] shrink-0" />
      <Wrench size={15} fill="#1e78c8" className="ml-[6px] shrink-0" />
    </div>
  </div>
);

export default App;
